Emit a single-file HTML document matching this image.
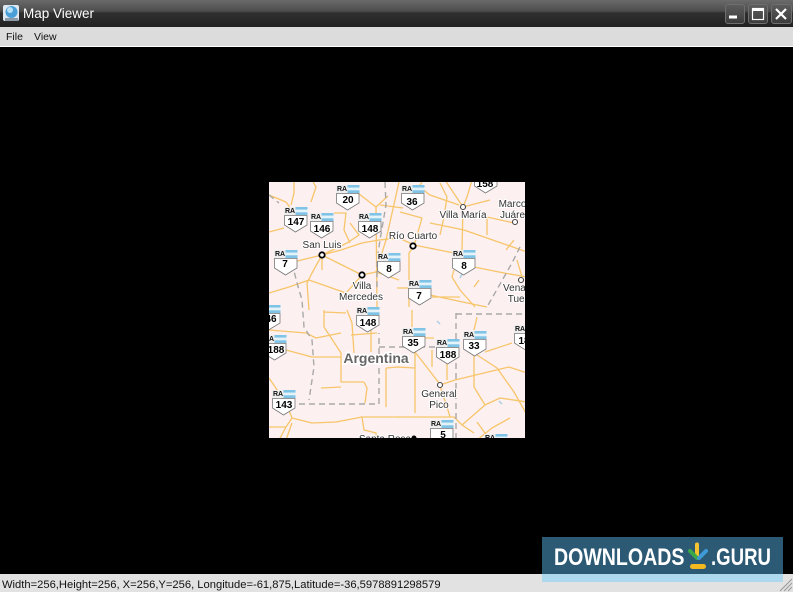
<!DOCTYPE html>
<html><head><meta charset="utf-8"><style>
html,body{margin:0;padding:0;background:#000}
#w{position:relative;width:793px;height:592px;overflow:hidden;background:#000;font-family:"Liberation Sans",sans-serif}
#t{position:absolute;left:0;top:0;width:793px;height:27px;background:linear-gradient(#6a6a6a 0,#4d4d4d 11px,#2f2f2f 13px,#222 27px)}
#tt{position:absolute;left:23px;top:6px;font-size:13.5px;color:#fff}
#m{position:absolute;left:0;top:27px;width:793px;height:19px;background:#dcdcdc;border-bottom:1px solid #fff}
#m span{position:absolute;top:3.500px;font-size:10.5px;color:#111}
#s{position:absolute;left:0;top:574px;width:793px;height:18px;background:#e2e2e2}
#s span{position:absolute;left:2px;top:5px;font-size:11.2px;color:#111;white-space:nowrap}
#b{position:absolute;left:542px;top:537px;width:241px;height:45px;background:#aed8ee}
#b div{position:absolute;left:0;top:0;width:241px;height:37px;background:#2c5a75}
#b span{position:absolute;top:7px;font-size:24px;font-weight:bold;color:#fff;white-space:nowrap;transform-origin:0 0}
.bt{position:absolute;top:4px;width:18px;height:18px;border:1px solid #6e6e6e;border-radius:3px;background:linear-gradient(#5c5c5c,#3c3c3c)}
svg{position:absolute;left:0;top:0}
</style></head><body><div id="w">
<div id="t"></div>
<svg width="22" height="24" style="left:2px;top:3px"><rect x="1" y="2" width="16" height="16" rx="2" fill="#dfe8f0"/><circle cx="9.500" cy="9" r="6" fill="#4a9fd8"/><circle cx="8" cy="7" r="3" fill="#b5e0f5"/><rect x="3" y="15" width="13" height="3" fill="#8c9aa8"/></svg>
<div id="tt">Map Viewer</div>
<div class="bt" style="left:725px"></div><div class="bt" style="left:748px"></div><div class="bt" style="left:771px;width:19px"></div>
<svg width="793" height="27" fill="none" stroke="#fff"><rect x="729" y="15.500" width="8" height="3" fill="#fff" stroke="none"/><rect x="752.500" y="8.500" width="11" height="11" stroke-width="1.200"/><rect x="752" y="8" width="12" height="3" fill="#fff" stroke="none"/><path d="M776 9L786 19M786 9L776 19" stroke-width="2.200"/></svg>
<div id="m"><span style="left:6px">File</span><span style="left:34px">View</span></div>

<svg width="793" height="592" viewBox="0 0 793 592" style="left:0;top:0">
<defs>
<clipPath id="c"><rect x="269" y="182" width="256" height="256"/></clipPath>
<g id="sh"><path d="M.5 8.500H23V18L11.500 25 .5 18Z" fill="#fff" stroke="#777" stroke-width=".8"/><rect x="0" y="0" width="23.500" height="8" fill="#eee"/><rect x="11.500" y="0" width="12" height="2.700" fill="#7fc4e6"/><rect x="11.500" y="2.700" width="12" height="2.600" fill="#e4f3fa"/><rect x="11.500" y="5.300" width="12" height="2.700" fill="#7fc4e6"/></g>
</defs>
<g clip-path="url(#c)">
<rect x="269" y="182" width="256" height="256" fill="#fdf0f1"/>
<g fill="none" stroke="#f7c56a" stroke-width="1.300" stroke-linejoin="round">
<path d="M269 232L284 228M269 195L286 202L294 213M294 180V193L291 205M312 180L316 187L311 202M334 213L346 213L344 230L350 243"/>
<path d="M322 255L289 263M322 255L362 275M322 255L312 273L307 283L309 310M322 255V270M322 255L347 243L359 235L350 223M322 255L341 250L362 243L379 240L399 238"/>
<path d="M362 275L376 272L399 280M376 207L377 307M269 293L289 287L309 280L346 293L362 275M376 272L386 240L399 182M350 187L376 207L388 196"/>
<path d="M269 330L306 333L316 338L341 333M324 310V327L341 353V382H364M321 388L341 387M364 382L367 388L365 403M286 350L312 357L341 357M347 310L352 323L354 353M351 335L377 333M371 330V352M324 312L346 313"/>
<path d="M269 378L286 403L292 418L312 423L336 422L362 417L399 417M292 418L286 427L279 440M286 427H269M292 423L286 440M362 417L364 430L376 433L377 440M386 368V407M386 368L399 367"/>
<path d="M415 352L439 383L447 407L450 417M447 363V380M432 350V367M397 367L415 368M415 352V413M397 417H454L462 425L474 433M455 380L484 373L509 367L527 373M440 385L455 380M474 353V387L485 405L462 425M485 405L500 398L527 402M485 352L512 343M474 353L497 368L514 392L527 415M477 317L474 330M412 310V327M425 338H434M477 422L490 440M510 418L492 428L477 440"/>
<path d="M445 180L463 207M417 185L430 195L459 205M463 207L490 200M463 207L467 197L472 180M463 207L462 250M440 183L447 197L444 217L440 235M397 237L414 245L454 253M430 223L464 230L527 252M414 246L422 218L400 212M414 246L409 253V307M432 297L460 297M474 267L504 273L527 277M454 270L452 277L460 290L475 307M397 288H409M430 295L477 305L487 307M479 280L474 287M487 217V235M487 217L514 223M514 240L506 250M522 277L517 260M422 182L412 197M403 208L380 205"/>
</g>
<g fill="none" stroke="#a9a9a9" stroke-width="1.400" stroke-dasharray="6 4">
<path d="M269 195L279 203M292 263L297 283L302 300L304 327L312 340L314 367L309 400M299 404H379V333M379 347H457M456 313V438M456 314H525M520 247L512 263L487 307"/>
<path d="M385 182L386 205L380 240L377 260V288"/>
</g>
<path d="M437 321l3 3M499 401l3 3M462 274l-2 4" stroke="#a9cfe4" stroke-width="1.500"/>
<g fill="#fff" stroke="#000" stroke-width="1.800"><circle cx="322" cy="255" r="2.700"/><circle cx="362" cy="275" r="2.700"/><circle cx="413" cy="246" r="2.700"/></g>
<g fill="#fff" stroke="#444" stroke-width="1.100"><circle cx="463" cy="207" r="2.500"/><circle cx="515" cy="222" r="2.500"/><circle cx="521" cy="280" r="2.500"/><circle cx="440" cy="385" r="2.500"/></g>
<circle cx="414" cy="438" r="2.500" fill="#000"/>
<g font-family="Liberation Sans,sans-serif" font-size="10" fill="#333" text-anchor="middle" stroke="#fff" stroke-width="2" paint-order="stroke">
<text x="322" y="248">San Luis</text><text x="413" y="239">Río Cuarto</text><text x="463" y="218">Villa María</text><text x="362" y="289">Villa</text><text x="361" y="300">Mercedes</text><text x="515" y="207">Marcos</text><text x="515" y="218">Juárez</text><text x="520" y="291">Venado</text><text x="522" y="302">Tuerto</text><text x="439" y="397">General</text><text x="439" y="408">Pico</text><text x="385" y="442">Santa Rosa</text>
<text x="376" y="363" font-size="14" font-weight="bold" fill="#666" stroke-width="3">Argentina</text></g>
<use href="#sh" x="336" y="185"/><use href="#sh" x="401" y="185"/><use href="#sh" x="474" y="168"/><use href="#sh" x="284" y="207"/><use href="#sh" x="310" y="213"/><use href="#sh" x="358" y="213"/><use href="#sh" x="274" y="250"/><use href="#sh" x="377" y="253"/><use href="#sh" x="452" y="250"/><use href="#sh" x="408" y="280"/><use href="#sh" x="257" y="305"/><use href="#sh" x="356" y="307"/><use href="#sh" x="402" y="328"/><use href="#sh" x="263" y="335"/><use href="#sh" x="436" y="339"/><use href="#sh" x="463" y="331"/><use href="#sh" x="514" y="325"/><use href="#sh" x="272" y="390"/><use href="#sh" x="430" y="420"/><use href="#sh" x="484" y="434"/>
<g font-family="Liberation Sans,sans-serif" font-size="7" font-weight="bold" fill="#111"><text x="337" y="191">RA</text><text x="402" y="191">RA</text><text x="285" y="213">RA</text><text x="311" y="219">RA</text><text x="359" y="219">RA</text><text x="275" y="256">RA</text><text x="378" y="259">RA</text><text x="453" y="256">RA</text><text x="409" y="286">RA</text><text x="357" y="313">RA</text><text x="403" y="334">RA</text><text x="264" y="341">RA</text><text x="437" y="345">RA</text><text x="464" y="337">RA</text><text x="515" y="331">RA</text><text x="273" y="396">RA</text><text x="431" y="426">RA</text><text x="485" y="440">RA</text></g>
<g font-family="Liberation Sans,sans-serif" font-size="10" font-weight="bold" fill="#000" text-anchor="middle"><text x="348" y="203">20</text><text x="412" y="205">36</text><text x="485" y="187">158</text><text x="296" y="225">147</text><text x="322" y="232">146</text><text x="370" y="232">148</text><text x="285" y="267">7</text><text x="389" y="272">8</text><text x="464" y="269">8</text><text x="419" y="299">7</text><text x="271" y="322">46</text><text x="368" y="326">148</text><text x="413" y="346">35</text><text x="276" y="353">188</text><text x="448" y="358">188</text><text x="474" y="349">33</text><text x="524" y="344">18</text><text x="284" y="408">143</text><text x="443" y="438">5</text></g>
</g>
</svg>

<div id="s"><span>Width=256,Height=256, X=256,Y=256, Longitude=-61,875,Latitude=-36,5978891298579</span></div>
<svg width="793" height="592" style="pointer-events:none"><path d="M780 591L792 579M784 591L792 583M788 591L792 587" stroke="#999" stroke-width="1"/></svg>
<div id="b"><div></div>
<span style="left:12px;transform:scaleX(.815)">DOWNLOADS</span>
<span style="left:169px;transform:scaleX(.775)">.GURU</span>
<svg width="241" height="37"><path d="M155 7.500V20" stroke="#f4c430" stroke-width="4" stroke-linecap="round"/><path d="M148 14L155 21" stroke="#3aa848" stroke-width="4" stroke-linecap="round"/><path d="M164 14L157 21" stroke="#3f9bd8" stroke-width="4" stroke-linecap="round"/><rect x="148" y="27" width="16" height="5" rx="2.500" fill="#f4b820"/></svg>
</div>
</div></body></html>
